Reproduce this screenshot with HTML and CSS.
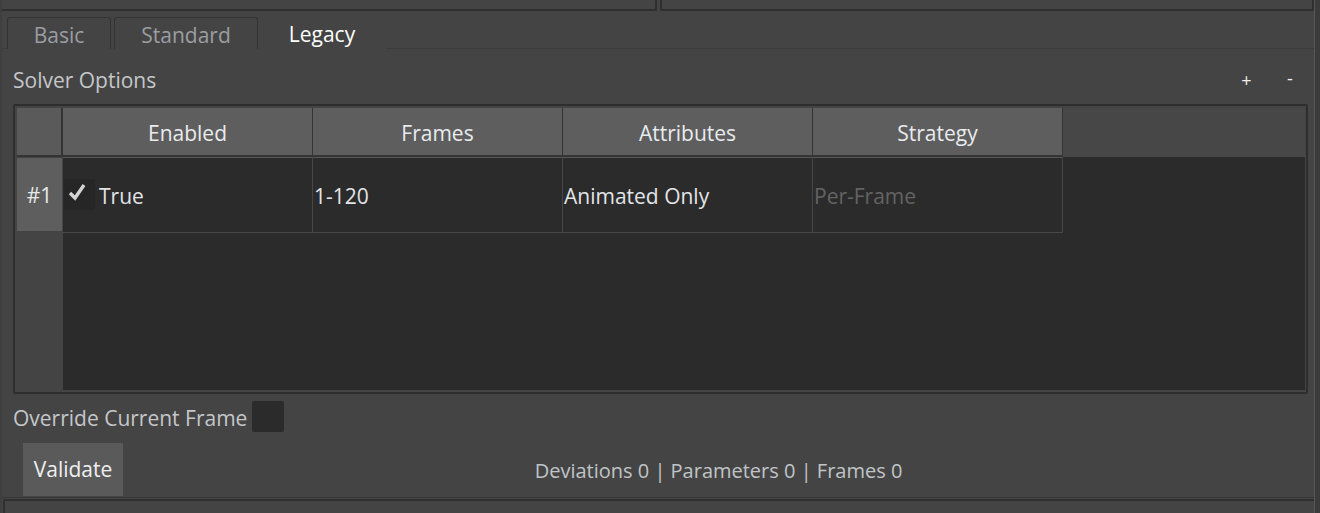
FILE: index.html
```html
<!DOCTYPE html>
<html>
<head>
<meta charset="utf-8">
<link rel="stylesheet" href="styles.css">
</head>
<body>
<div class="app">
  <div class="main">
    <div class="top-boxes">
      <div class="top-box first"></div>
      <div class="top-box second"></div>
    </div>
    <div class="tabs">
      <div class="tab">Basic</div>
      <div class="tab">Standard</div>
      <div class="tab active">Legacy</div>
      <div class="tab-fill"></div>
    </div>
    <div class="section-head">
      <span class="section-title">Solver Options</span>
      <div class="head-buttons">
        <span class="mini-btn">+</span>
        <span class="mini-btn minus">-</span>
      </div>
    </div>
    <div class="table-frame">
      <div class="grid">
        <div class="hcell corner"></div>
        <div class="hcell">Enabled</div>
        <div class="hcell">Frames</div>
        <div class="hcell">Attributes</div>
        <div class="hcell">Strategy</div>
        <div class="hfill"></div>

        <div class="rowhead">#1</div>
        <div class="cell enabled">
          <span class="check">
            <svg width="22" height="22" viewBox="0 0 22 22"><polyline points="2,10 7,15 16,2" fill="none" stroke="#d4d4d4" stroke-width="3.4" stroke-linecap="butt" stroke-linejoin="miter"/></svg>
          </span>
          <span>True</span>
        </div>
        <div class="cell">1-120</div>
        <div class="cell">Animated Only</div>
        <div class="cell dim">Per-Frame</div>
        <div class="cell-fill"></div>

        <div class="side-fill"></div>
        <div class="body-fill"></div>
      </div>
    </div>
    <div class="override">
      <span class="label">Override Current Frame</span>
      <span class="checkbox"></span>
    </div>
    <div class="footer">
      <button class="validate">Validate</button>
      <div class="status">Deviations 0 | Parameters 0 | Frames 0</div>
    </div>
    <div class="bottom">
      <div class="bottom-box"></div>
    </div>
  </div>
  <div class="edge"></div>
</div>
</body>
</html>
```
FILE: styles.css
```css
html, body {
  margin: 0;
  padding: 0;
}
body {
  width: 1320px;
  height: 513px;
  overflow: hidden;
  background: #444444;
  font-family: "Open Sans", "Noto Sans", sans-serif;
  font-size: 21px;
  color: #c4c7ca;
}
.app {
  display: flex;
  height: 513px;
}
.main {
  flex: 1;
  display: flex;
  flex-direction: column;
  border-left: 2px solid #3f3f3f;
  min-width: 0;
}
.edge {
  width: 5px;
  background: #3b3b3b;
  border-left: 1px solid #575757;
}
.top-boxes {
  display: flex;
  height: 11px;
  gap: 3px;
}
.top-box {
  height: 9px;
  border-bottom: 2px solid #2f2f2f;
  border-right: 2px solid #2f2f2f;
  border-bottom-right-radius: 2px;
  box-sizing: content-box;
}
.top-box.first {
  width: 653px;
}
.top-box.second {
  flex: 1;
  border-left: 2px solid #2f2f2f;
  border-bottom-left-radius: 2px;
}
.tabs {
  display: flex;
  margin-top: 6px;
  height: 32px;
  align-items: stretch;
}
.tabs::before {
  content: "";
  width: 5px;
  border-bottom: 1px solid #3c3c3c;
}
.tab {
  box-sizing: border-box;
  border: 1px solid #333333;
  border-bottom: none;
  border-radius: 3px 3px 0 0;
  color: #9a9ea2;
  display: flex;
  align-items: center;
  justify-content: center;
  padding-top: 2px;
}
.tab:nth-child(1) {
  width: 104px;
}
.tab:nth-child(2) {
  width: 144px;
  margin-left: 3px;
}
.tab.active {
  width: 128px;
  border: none;
  color: #ffffff;
}
.tab-fill {
  flex: 1;
  border-bottom: 1px solid #3c3c3c;
}
.section-head {
  height: 55px;
  box-sizing: border-box;
  padding: 7px 0 0 11px;
  display: flex;
  align-items: center;
  justify-content: space-between;
}
.section-title {
  color: #c4c7ca;
}
.head-buttons {
  display: flex;
  align-items: center;
  margin-right: 14px;
}
.mini-btn {
  width: 45px;
  text-align: center;
  color: #f0f0f0;
  font-size: 18px;
}
.mini-btn.minus {
  width: 20px;
  margin-left: 11px;
  margin-top: -4px;
}
.table-frame {
  margin: 0 6px 0 11px;
  height: 290px;
  box-sizing: border-box;
  border: 2px solid #2e2e2e;
  border-radius: 2px;
  padding: 2px 1px 2px 2px;
}
.grid {
  display: grid;
  height: 100%;
  grid-template-columns: 46px 250px 250px 250px 250px 1fr;
  grid-template-rows: 49px 76px 1fr;
}
.hcell {
  background: #5e5e5e;
  border-right: 1px solid #343434;
  border-bottom: 2px solid #343434;
  display: flex;
  align-items: center;
  justify-content: center;
  color: #e8ebee;
  padding-top: 3px;
}
.hcell.corner {
  background: #5a5a5a;
  border-right: 2px solid #343434;
}
.hfill {
  background: #474747;
}
.rowhead {
  background: #5e5e5e;
  margin: 1px 1px 2px 0;
  display: flex;
  align-items: center;
  justify-content: center;
  color: #e6e9ec;
  padding-top: 1px;
}
.cell {
  background: #2b2b2b;
  border-right: 1px solid #474747;
  border-top: 1px solid #555555;
  border-bottom: 1px solid #474747;
  display: flex;
  align-items: center;
  padding-left: 1px;
  padding-top: 2px;
  color: #e2e5e8;
  white-space: nowrap;
}
.cell.dim {
  color: #636363;
}
.cell.enabled {
  padding-left: 1px;
  gap: 4px;
}
.check {
  width: 31px;
  height: 31px;
  background: #262626;
  border-radius: 2px;
  display: flex;
  align-items: flex-start;
  justify-content: flex-start;
  padding: 4px 0 0 4px;
  box-sizing: border-box;
  margin-top: -4px;
}
.cell-fill {
  background: #2b2b2b;
}
.side-fill {
  background: #444444;
}
.body-fill {
  grid-column: 2 / 7;
  background: #2b2b2b;
}
.override {
  display: flex;
  align-items: center;
  height: 31px;
  margin-top: 7px;
  padding-left: 11px;
  gap: 5px;
}
.override .label {
  color: #c4c7ca;
  padding-top: 2px;
}
.checkbox {
  width: 32px;
  height: 31px;
  background: #2b2b2b;
  border-radius: 2px;
}
.footer {
  display: flex;
  align-items: center;
  height: 54px;
  margin-top: 11px;
  padding-left: 21px;
}
.validate {
  width: 100px;
  height: 53px;
  align-self: flex-start;
  background: #5a5a5a;
  border: none;
  border-radius: 0;
  font-family: inherit;
  font-size: 21px;
  color: #eef0f2;
  padding: 0 0 1px 0;
}
.status {
  flex: 1;
  text-align: center;
  color: #c0c4c8;
  font-size: 20px;
  padding-top: 1px;
}
.bottom {
  flex: 1;
  border-top: 1px solid #363636;
  padding-top: 1px;
}
.bottom-box {
  margin-left: 1px;
  height: 100%;
  box-sizing: border-box;
  border-top: 2px solid #2f2f2f;
  border-left: 2px solid #2f2f2f;
  border-radius: 2px 0 0 0;
}
```
